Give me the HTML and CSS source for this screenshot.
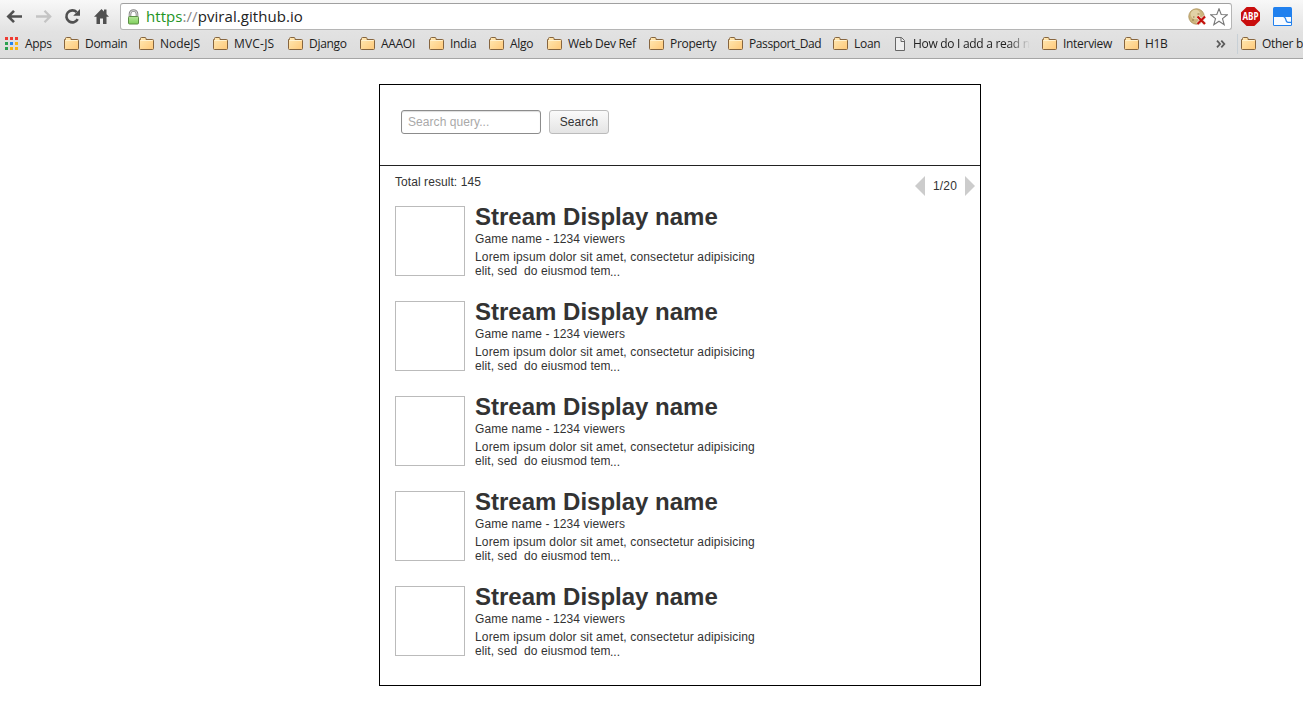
FILE: index.html
```html
<!DOCTYPE html>
<html lang="en">
<head>
<meta charset="utf-8">
<title>Stream search</title>
<link rel="stylesheet" href="styles.css">
</head>
<body>
<svg class="defs" width="0" height="0">
  <defs>
    <linearGradient id="fold" x1="0" y1="0" x2="1" y2="1"><stop offset="0" stop-color="#ffe9b5"/><stop offset="1" stop-color="#ffc979"/></linearGradient>
    <linearGradient id="lockfill" x1="0" y1="0" x2="0" y2="1"><stop offset="0" stop-color="#b5e69a"/><stop offset="1" stop-color="#7fd05c"/></linearGradient>
    <symbol id="folder" viewBox="0 0 16 14"><path d="M.5 11.500V2.500H1.500V1.500Q1.500 .5 2.500 .5H6Q7 .5 7 1.500V2.500H13.500Q14.500 2.500 14.500 3.500V11.500Q14.500 12.500 13.500 12.500H1.500Q.5 12.500 .5 11.500Z" fill="url(#fold)" stroke="#86653f"/><path d="M1.500 3.500H13.500" stroke="#fff3d2"/></symbol>
  </defs>
</svg>
<header class="browser">
  <div class="toolbar">
    <svg class="nav" width="120" height="32" viewBox="0 0 120 32">
      <path d="M22 16.500H8.500M14 10.800L8.300 16.500L14 22.200" fill="none" stroke="#505050" stroke-width="2.600"/>
      <path d="M36 16.500H49.500M44.500 10.800L50.200 16.500L44.500 22.200" fill="none" stroke="#c4c4c4" stroke-width="2.300"/>
      <path d="M77.700 19.200A6 6 0 1 1 76.700 12.200" fill="none" stroke="#505050" stroke-width="2.600"/><path d="M80 9V15.800H73.200Z" fill="#505050"/>
      <path d="M101.500 9L109 16.700H106.500V24H103V18.500H100V24H96.500V16.700H94Z" fill="#505050"/><path d="M104 9.500H106.500V14H104Z" fill="#505050"/>
    </svg>
    <div class="omnibox">
      <svg class="lock" width="13" height="16" viewBox="0 0 13 16"><path d="M3 8V5A3.500 3.500 0 0 1 10 5V8" fill="none" stroke="#888" stroke-width="2.600"/><path d="M3 8V5A3.500 3.500 0 0 1 10 5V8" fill="none" stroke="#ddd" stroke-width=".9"/><rect x="1.500" y="7.500" width="10" height="7.500" rx="1" fill="url(#lockfill)" stroke="#5c8f45"/></svg>
      <span class="url"><span class="secure">https</span><span class="slashes">://</span>pviral.github.io</span>
      <svg class="cookie" width="19" height="18" viewBox="0 0 19 18"><circle cx="8.500" cy="8.500" r="7.700" fill="#cdb67e" stroke="#b39a64"/><circle cx="7.500" cy="6.500" r="4.800" fill="#e2d2a6"/><path d="M9.500 6H11.500M5 9H6.500M4 12H6" stroke="#94794a" stroke-width="1.200"/><path d="M9.500 8.500L17 16M17 8.500L9.500 16" stroke="#f3e6dc" stroke-width="3.300"/><path d="M9.500 8.500L17 16M17 8.500L9.500 16" stroke="#c4100c" stroke-width="2.200"/></svg>
      <svg class="star" width="18" height="18" viewBox="0 0 18 18"><path d="M9 .8L11.200 6.500L17.300 6.800L12.500 10.600L14.200 16.700L9 13.200L3.800 16.700L5.500 10.600L.7 6.800L6.800 6.500Z" fill="#fff" stroke="#777" stroke-width="1.100"/></svg>
    </div>
    <svg class="abp" width="19" height="19" viewBox="0 0 19 19"><path d="M5.600 0H13.400L19 5.600V13.400L13.400 19H5.600L0 13.400V5.600Z" fill="#c90d0d"/><text x="9.500" y="13" textLength="16" lengthAdjust="spacingAndGlyphs" text-anchor="middle" class="abp-text">ABP</text></svg>
    <svg class="tabext" width="19" height="19" viewBox="0 0 19 19"><rect width="19" height="19" rx="1.500" fill="#2080ee"/><path d="M1 10H10Q11.300 10 12 12L12.700 14.200Q13.300 16 15 16H18V18H1Z" fill="#f8fbff"/><path d="M12 10H18V14.800H15.500Q14.300 14.800 13.800 13.500L13 11.300Q12.600 10.300 12 10Z" fill="#f8fbff"/></svg>
  </div>
  <nav class="bookmarks">
    <a class="bm w-apps"><svg width="14" height="14" viewBox="0 0 14 14"><path d="M0 0h3v3H0zM5 0h3v3H5zM10 0h3v3h-3z" fill="#ee3b32"/><path d="M0 5h3v3H0zM0 10h3v3H0z" fill="#2ca050"/><path d="M5 5h3v3H5z" fill="#2484ee"/><path d="M10 5h3v3h-3zM5 10h3v3H5zM10 10h3v3h-3z" fill="#f7b411"/></svg><span>Apps</span></a>
    <a class="bm w-domain"><svg width="16" height="14"><use href="#folder"/></svg><span>Domain</span></a>
    <a class="bm w-node"><svg width="16" height="14"><use href="#folder"/></svg><span>NodeJS</span></a>
    <a class="bm w-mvc"><svg width="16" height="14"><use href="#folder"/></svg><span>MVC-JS</span></a>
    <a class="bm w-django"><svg width="16" height="14"><use href="#folder"/></svg><span>Django</span></a>
    <a class="bm w-aaaoi"><svg width="16" height="14"><use href="#folder"/></svg><span>AAAOI</span></a>
    <a class="bm w-india"><svg width="16" height="14"><use href="#folder"/></svg><span>India</span></a>
    <a class="bm w-algo"><svg width="16" height="14"><use href="#folder"/></svg><span>Algo</span></a>
    <a class="bm w-web"><svg width="16" height="14"><use href="#folder"/></svg><span>Web Dev Ref</span></a>
    <a class="bm w-property"><svg width="16" height="14"><use href="#folder"/></svg><span>Property</span></a>
    <a class="bm w-passport"><svg width="16" height="14"><use href="#folder"/></svg><span>Passport_Dad</span></a>
    <a class="bm w-loan"><svg width="16" height="14"><use href="#folder"/></svg><span>Loan</span></a>
    <a class="bm w-how"><svg width="11" height="14" viewBox="0 0 11 14"><path d="M.5 .5H6.500L9.500 3.500V13.500H.5Z" fill="#eee" stroke="#666"/><path d="M6 .5V4.500H10" fill="none" stroke="#666"/></svg><span class="fade">How do I add a read n</span></a>
    <a class="bm w-interview"><svg width="16" height="14"><use href="#folder"/></svg><span>Interview</span></a>
    <a class="bm w-h1b"><svg width="16" height="14"><use href="#folder"/></svg><span>H1B</span></a>
    <svg class="more" width="10" height="8" viewBox="0 0 10 8"><path d="M1 .7L4 4L1 7.300M5.300 .7L8.300 4L5.300 7.300" fill="none" stroke="#5b5b5b" stroke-width="1.800"/></svg>
    <i class="divider"></i>
    <a class="bm w-other"><svg width="16" height="14"><use href="#folder"/></svg><span>Other b</span></a>
  </nav>
</header>
<main class="panel">
  <form class="search">
    <input class="query" type="text" placeholder="Search query...">
    <button class="submit" type="button">Search</button>
  </form>
  <div class="summary">
    <span class="total">Total result: 145</span>
    <div class="pager"><i class="prev"></i><span>1/20</span><i class="next"></i></div>
  </div>
  <section class="results">
    <article class="stream"><div class="thumb"></div><div class="info"><h2>Stream Display name</h2><p class="game">Game name - 1234 viewers</p><p class="desc">Lorem ipsum dolor sit amet, consectetur adipisicing</p><p class="desc last"><span class="clip">elit, sed&nbsp; do eiusmod tem</span><span class="dots">...</span></p></div></article>
    <article class="stream"><div class="thumb"></div><div class="info"><h2>Stream Display name</h2><p class="game">Game name - 1234 viewers</p><p class="desc">Lorem ipsum dolor sit amet, consectetur adipisicing</p><p class="desc last"><span class="clip">elit, sed&nbsp; do eiusmod tem</span><span class="dots">...</span></p></div></article>
    <article class="stream"><div class="thumb"></div><div class="info"><h2>Stream Display name</h2><p class="game">Game name - 1234 viewers</p><p class="desc">Lorem ipsum dolor sit amet, consectetur adipisicing</p><p class="desc last"><span class="clip">elit, sed&nbsp; do eiusmod tem</span><span class="dots">...</span></p></div></article>
    <article class="stream"><div class="thumb"></div><div class="info"><h2>Stream Display name</h2><p class="game">Game name - 1234 viewers</p><p class="desc">Lorem ipsum dolor sit amet, consectetur adipisicing</p><p class="desc last"><span class="clip">elit, sed&nbsp; do eiusmod tem</span><span class="dots">...</span></p></div></article>
    <article class="stream"><div class="thumb"></div><div class="info"><h2>Stream Display name</h2><p class="game">Game name - 1234 viewers</p><p class="desc">Lorem ipsum dolor sit amet, consectetur adipisicing</p><p class="desc last"><span class="clip">elit, sed&nbsp; do eiusmod tem</span><span class="dots">...</span></p></div></article>
  </section>
</main>
</body>
</html>
```
FILE: styles.css
```css
* { box-sizing: border-box; }
body { margin: 0; height: 702px; overflow: hidden; background: #fff; color: #333; font: 12px/14px "Liberation Sans", Arial, sans-serif; }
.defs { position: absolute; }
h2, p { margin: 0; font-weight: normal; }

.browser { height: 59px; overflow: hidden; background: linear-gradient(#f8f8f8, #e2e2e2 32px, #dcdcdc); border-bottom: 1px solid #a5a5a5; font-family: "Open Sans", "Noto Sans", sans-serif; }
.toolbar { display: flex; height: 32px; }
.nav { flex: none; }
.omnibox { display: flex; align-items: center; width: 1112px; height: 27px; margin-top: 3px; padding: 0 3px 0 6px; background: #fff; border: 1px solid #b5b5b5; border-top-color: #a0a0a0; border-radius: 3px; }
.lock { margin-right: 6px; }
.url { flex: 1; color: #222; font-size: 15px; line-height: 23px; letter-spacing: 0.06px; padding-bottom: 1px; }
.secure { color: #22941f; }
.slashes { color: #888; }
.cookie { margin-right: 3px; }
.abp { margin: 7px 0 0 9px; }
.abp-text { fill: #fff; font: bold 10px "Open Sans", sans-serif; }
.tabext { margin: 7px 0 0 13px; }

.bookmarks { display: flex; align-items: center; height: 24px; padding-left: 5px; white-space: nowrap; color: #222; font-size: 12px; letter-spacing: -0.3px; line-height: 18px; }
.bm { display: flex; flex: none; align-items: center; gap: 5px; }
.w-apps { width: 59px; gap: 6px; }
.w-domain { width: 75px; }
.w-node { width: 74px; letter-spacing: 0; }
.w-mvc { width: 75px; letter-spacing: 0.2px; }
.w-django { width: 72px; }
.w-aaaoi { width: 69px; }
.w-india { width: 60px; }
.w-algo { width: 58px; }
.w-web { width: 102px; }
.w-property { width: 79px; }
.w-passport { width: 105px; letter-spacing: -0.4px; }
.w-loan { width: 62px; }
.w-how { width: 147px; gap: 7px; }
.w-interview { width: 82px; }
.w-h1b { width: 92px; }
.fade { width: 117px; -webkit-mask-image: linear-gradient(90deg, #000 95px, transparent); mask-image: linear-gradient(90deg, #000 95px, transparent); }
.more { width: 10px; margin-right: 11px; flex: none; }
.divider { width: 1px; height: 20px; margin-right: 3px; background: #c8d0d6; flex: none; }

.panel { width: 602px; height: 602px; margin: 25px 0 0 379px; border: 1px solid #000; }
.search { display: flex; gap: 8px; height: 81px; padding: 25px 0 0 21px; border-bottom: 1px solid #222; }
.query { width: 140px; height: 24px; padding: 0 6px; border: 1px solid #8c8c8c; border-radius: 3px; box-shadow: inset 0 1px 1px #ddd; background: #fff; font: 12px "Liberation Sans", Arial, sans-serif; letter-spacing: 0.06px; }
.query::placeholder { color: #a9a9a9; }
.submit { width: 60px; height: 24px; padding: 0; border: 1px solid #bbb; border-radius: 3px; background: linear-gradient(#fafafa, #e4e4e4); color: #333; font: 12px "Liberation Sans", Arial, sans-serif; letter-spacing: 0.12px; }
.summary { display: flex; justify-content: space-between; height: 40px; padding: 9px 5px 0 15px; }
.total { letter-spacing: 0.07px; }
.pager { display: flex; align-items: center; gap: 8px; height: 22px; letter-spacing: 0.15px; }
.prev, .next { border: 10px solid transparent; border-width: 10px 0; }
.prev { border-right: 10px solid #ccc; }
.next { border-left: 10px solid #ccc; }
.results { display: grid; gap: 25px; padding-left: 15px; }
.stream { display: flex; gap: 10px; height: 70px; }
.thumb { width: 70px; height: 70px; border: 1px solid #bbb; }
.info { white-space: nowrap; }
.info h2 { height: 26px; font-size: 24px; font-weight: bold; line-height: 22px; }
.game { height: 18px; letter-spacing: 0.11px; }
.desc { height: 14px; letter-spacing: 0.14px; }
.last { display: flex; letter-spacing: 0.09px; }
.clip { width: 135px; overflow: hidden; }
.dots { padding-top: 1px; letter-spacing: 0; }
```
